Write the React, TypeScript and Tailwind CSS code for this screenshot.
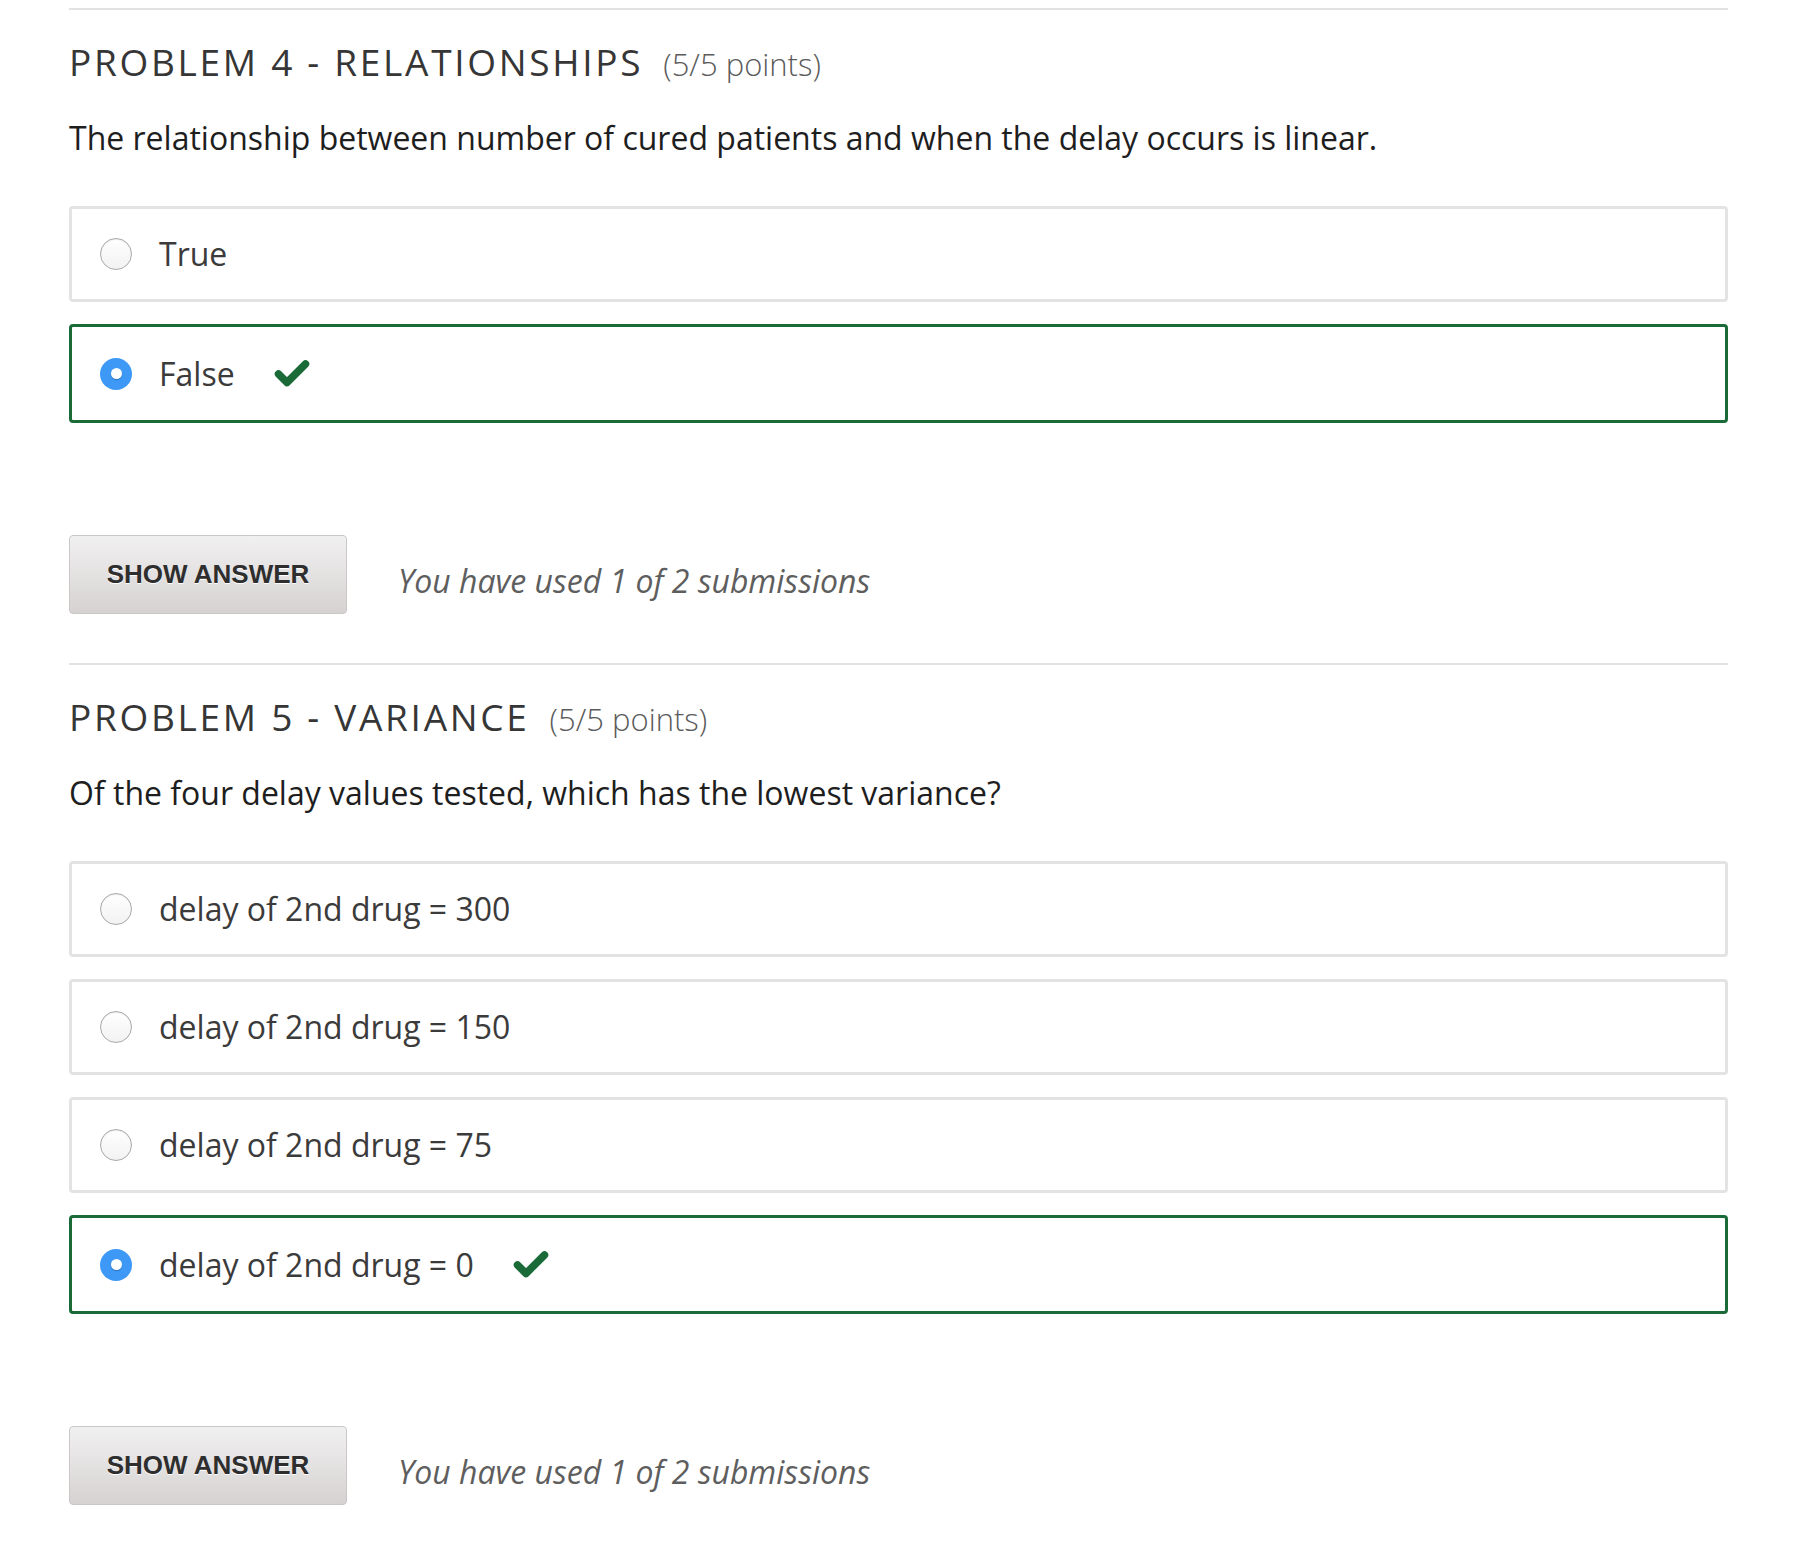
const problems = [
  {
    title: "PROBLEM 4 - RELATIONSHIPS",
    points: "(5/5 points)",
    question:
      "The relationship between number of cured patients and when the delay occurs is linear.",
    options: ["True", "False"],
    selected: 1,
  },
  {
    title: "PROBLEM 5 - VARIANCE",
    points: "(5/5 points)",
    question: "Of the four delay values tested, which has the lowest variance?",
    options: [
      "delay of 2nd drug = 300",
      "delay of 2nd drug = 150",
      "delay of 2nd drug = 75",
      "delay of 2nd drug = 0",
    ],
    selected: 3,
  },
];

const Check = () => (
  <svg width="36" height="30" viewBox="0 0 36 30" className="ml-[39px]">
    <polyline
      points="4.5,15 13,23.5 31.5,5"
      fill="none"
      stroke="#1a6b38"
      strokeWidth="7.5"
      strokeLinecap="round"
      strokeLinejoin="round"
    />
  </svg>
);

const Radio = ({ checked }: { checked: boolean }) =>
  checked ? (
    <span className="flex h-8 w-8 shrink-0 items-center justify-center rounded-full bg-[#3d98f6]">
      <span className="h-[11px] w-[11px] rounded-full bg-white shadow-[0_1px_1px_rgba(0,0,0,0.25)]" />
    </span>
  ) : (
    <span className="h-8 w-8 shrink-0 rounded-full border border-[#a9a9a9] bg-gradient-to-b from-white to-[#f2f2f2] shadow-[inset_0_1px_1px_rgba(0,0,0,0.08)]" />
  );

const Problem = ({ p }: { p: (typeof problems)[number] }) => (
  <section className="border-t-2 border-[#e2e2e2] pb-[49px]">
    <h2 className="mt-[32px] flex items-baseline leading-[40px]">
      <span className="text-[37px] tracking-[2.7px] text-[#363636]">
        {p.title}
      </span>
      <span className="ml-[20px] text-[31px] font-light text-[#5b5b5b]">
        {p.points}
      </span>
    </h2>
    <p className="mt-[34px] text-[32px] leading-[40px] text-[#1e1e1e]">
      {p.question}
    </p>
    <div className="mt-[48px] flex flex-col gap-[22px]">
      {p.options.map((o, i) => {
        const sel = i === p.selected;
        return (
          <div
            key={o}
            className={
              sel
                ? "flex h-[99px] items-center rounded-[4px] border-[3px] border-[#1a6b38] pl-[28px]"
                : "flex h-[96px] items-center rounded-[4px] border-[3px] border-[#e3e3e3] pl-[28px]"
            }
          >
            <Radio checked={sel} />
            <span className="ml-[27px] text-[32px] text-[#3b3b3b]">{o}</span>
            {sel && <Check />}
          </div>
        );
      })}
    </div>
    <div className="mt-[112px] flex items-center">
      <button className="h-[79px] w-[278px] rounded-[4px] border border-[#cbc7c7] bg-gradient-to-b from-[#f1f0f0] to-[#d6d2d2] font-['Liberation_Sans',Arial,sans-serif] text-[26px] font-bold text-[#2e2e2e] [text-shadow:0_1px_0_#fff]">
        SHOW ANSWER
      </button>
      <span className="ml-[51px] mt-[13px] text-[32px] italic text-[#5e5e5e]">
        You have used 1 of 2 submissions
      </span>
    </div>
  </section>
);

export default function App() {
  return (
    <div className="min-h-[1542px] bg-white px-[69px] pt-[8px] font-['Open_Sans',sans-serif]">
      {problems.map((p) => (
        <Problem key={p.title} p={p} />
      ))}
    </div>
  );
}
